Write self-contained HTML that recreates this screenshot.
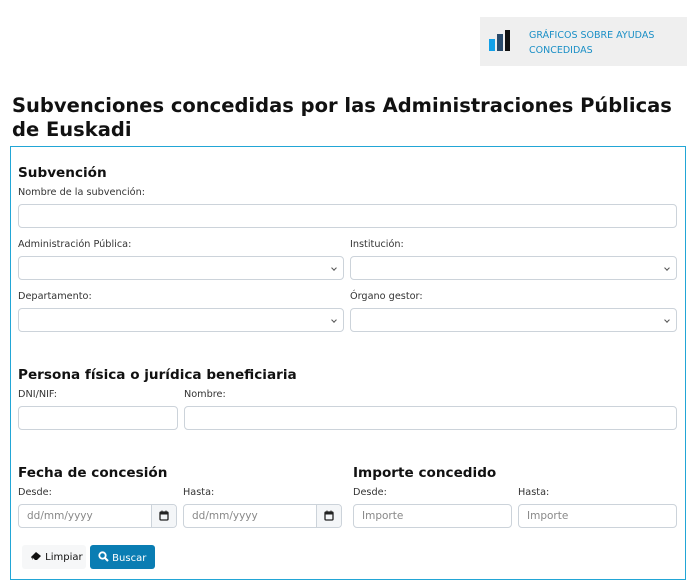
<!DOCTYPE html>
<html><head><meta charset="utf-8"><style>
*{box-sizing:border-box;margin:0;padding:0}
body{width:700px;height:585px;background:#fff;font-family:"DejaVu Sans",Verdana,sans-serif;position:relative;overflow:hidden;color:#222}
.a{position:absolute;white-space:nowrap}
.lbl{font-size:9.7px;color:#333}
.h{font-size:13.6px;font-weight:bold;color:#111}
.in{position:absolute;border:1px solid #ccd3da;border-radius:4px;background:#fff;height:24px}
.sel::after{content:"";position:absolute;right:7px;top:9px;width:3px;height:3px;border-right:1px solid #555;border-bottom:1px solid #555;transform:rotate(45deg)}
.ph{font-size:10.5px;color:#888;position:absolute;left:8px;top:5px}
.cal{position:absolute;right:0;top:0;width:25px;height:22px;border-left:1px solid #ccd3da;background:#f4f6f8;border-radius:0 4px 4px 0}
</style></head><body>
<div class="a" style="left:480px;top:17px;width:207px;height:49px;background:#efefef"></div>
<div class="a" style="left:489px;top:39px;width:6px;height:12px;background:#12a0e8"></div>
<div class="a" style="left:497px;top:34px;width:6px;height:17px;background:#2a4a6a"></div>
<div class="a" style="left:505px;top:30px;width:5px;height:21px;background:#111"></div>
<div class="a" style="left:529px;top:28px;font-size:9.5px;line-height:15px;color:#1a8fc6">GRÁFICOS SOBRE AYUDAS<br>CONCEDIDAS</div>
<div class="a" style="left:12px;top:94px;font-size:19.5px;font-weight:bold;line-height:24px;color:#111">Subvenciones concedidas por las Administraciones Públicas<br>de Euskadi</div>
<div class="a" style="left:10px;top:146px;width:676px;height:434px;border:1px solid #22a6d6"></div>
<div class="a h" style="left:18px;top:165px">Subvención</div>
<div class="a lbl" style="left:18px;top:187px">Nombre de la subvención:</div>
<div class="in" style="left:18px;top:204px;width:659px"></div>
<div class="a lbl" style="left:18px;top:239px">Administración Pública:</div>
<div class="a lbl" style="left:350px;top:239px">Institución:</div>
<div class="in sel" style="left:18px;top:256px;width:326px"></div>
<div class="in sel" style="left:350px;top:256px;width:327px"></div>
<div class="a lbl" style="left:18px;top:291px">Departamento:</div>
<div class="a lbl" style="left:350px;top:291px">Órgano gestor:</div>
<div class="in sel" style="left:18px;top:308px;width:326px"></div>
<div class="in sel" style="left:350px;top:308px;width:327px"></div>
<div class="a h" style="left:18px;top:367px">Persona física o jurídica beneficiaria</div>
<div class="a lbl" style="left:18px;top:389px">DNI/NIF:</div>
<div class="a lbl" style="left:184px;top:389px">Nombre:</div>
<div class="in" style="left:18px;top:406px;width:160px"></div>
<div class="in" style="left:184px;top:406px;width:493px"></div>
<div class="a h" style="left:18px;top:465px">Fecha de concesión</div>
<div class="a h" style="left:353px;top:465px">Importe concedido</div>
<div class="a lbl" style="left:18px;top:487px">Desde:</div>
<div class="a lbl" style="left:183px;top:487px">Hasta:</div>
<div class="a lbl" style="left:353px;top:487px">Desde:</div>
<div class="a lbl" style="left:518px;top:487px">Hasta:</div>
<div class="in" style="left:18px;top:504px;width:159px"><span class="ph">dd/mm/yyyy</span><div class="cal"><svg width="25" height="22"><rect x="8" y="7" width="8" height="8" rx="1" fill="none" stroke="#222" stroke-width="1.3"/><rect x="8" y="7" width="8" height="2.5" fill="#222"/><line x1="10" y1="5.5" x2="10" y2="7" stroke="#222"/><line x1="14" y1="5.5" x2="14" y2="7" stroke="#222"/></svg></div></div>
<div class="in" style="left:183px;top:504px;width:159px"><span class="ph">dd/mm/yyyy</span><div class="cal"><svg width="25" height="22"><rect x="8" y="7" width="8" height="8" rx="1" fill="none" stroke="#222" stroke-width="1.3"/><rect x="8" y="7" width="8" height="2.5" fill="#222"/><line x1="10" y1="5.5" x2="10" y2="7" stroke="#222"/><line x1="14" y1="5.5" x2="14" y2="7" stroke="#222"/></svg></div></div>
<div class="in" style="left:353px;top:504px;width:159px"><span class="ph">Importe</span></div>
<div class="in" style="left:518px;top:504px;width:159px"><span class="ph">Importe</span></div>
<div class="a" style="left:22px;top:545px;width:64px;height:24px;background:#f6f7f8;border-radius:3px;font-size:10px;color:#111;padding:6px 0 0 8px"><svg width="12" height="10" style="vertical-align:-1px"><path d="M1 6 L6 1 L11 5 L7 9 H3 Z" fill="#111"/><path d="M2.5 6.5 L5 9 H3 Z" fill="#fff"/></svg> Limpiar</div>
<div class="a" style="left:90px;top:545px;width:65px;height:24px;background:#0a7db3;border-radius:3px;font-size:10px;color:#fff;padding:6px 0 0 8px"><svg width="11" height="11" style="vertical-align:-1px"><circle cx="4.5" cy="4.5" r="3.2" fill="none" stroke="#fff" stroke-width="1.8"/><line x1="7" y1="7" x2="10" y2="10" stroke="#fff" stroke-width="2"/></svg> Buscar</div>
</body></html>
